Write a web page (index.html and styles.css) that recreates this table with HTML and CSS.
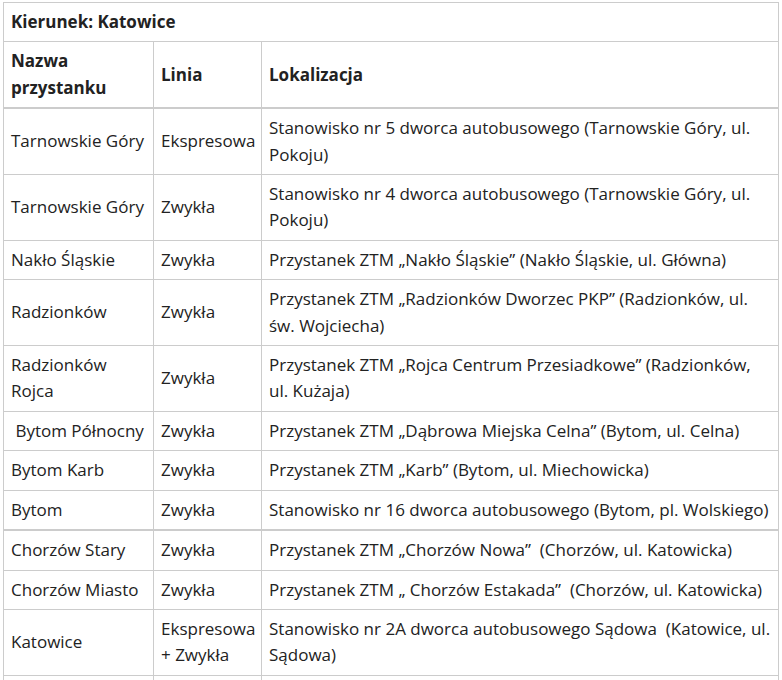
FILE: index.html
```html
<!DOCTYPE html>
<html lang="pl">
<head>
<meta charset="utf-8">
<title>Kierunek: Katowice</title>
<link rel="stylesheet" href="styles.css">
</head>
<body>
<table class="schedule">
  <colgroup>
    <col class="c-name">
    <col class="c-line">
    <col class="c-loc">
  </colgroup>
  <thead>
    <tr class="caption-row"><th colspan="3">Kierunek: Katowice</th></tr>
    <tr class="head-row">
      <th>Nazwa przystanku</th>
      <th>Linia</th>
      <th>Lokalizacja</th>
    </tr>
  </thead>
  <tbody>
    <tr><td>Tarnowskie Góry</td><td>Ekspresowa</td><td>Stanowisko nr 5 dworca autobusowego (Tarnowskie Góry, ul. Pokoju)</td></tr>
    <tr><td>Tarnowskie Góry</td><td>Zwykła</td><td>Stanowisko nr 4 dworca autobusowego (Tarnowskie Góry, ul. Pokoju)</td></tr>
    <tr><td>Nakło Śląskie</td><td>Zwykła</td><td>Przystanek ZTM „Nakło Śląskie” (Nakło Śląskie, ul. Główna)</td></tr>
    <tr><td>Radzionków</td><td>Zwykła</td><td>Przystanek ZTM „Radzionków Dworzec PKP” (Radzionków, ul. św. Wojciecha)</td></tr>
    <tr><td>Radzionków Rojca</td><td>Zwykła</td><td>Przystanek ZTM „Rojca Centrum Przesiadkowe” (Radzionków, ul. Kużaja)</td></tr>
    <tr><td>&nbsp;Bytom Północny</td><td>Zwykła</td><td>Przystanek ZTM „Dąbrowa Miejska Celna” (Bytom, ul. Celna)</td></tr>
    <tr><td>Bytom Karb</td><td>Zwykła</td><td>Przystanek ZTM „Karb” (Bytom, ul. Miechowicka)</td></tr>
    <tr class="group-end"><td>Bytom</td><td>Zwykła</td><td>Stanowisko nr 16 dworca autobusowego (Bytom, pl. Wolskiego)</td></tr>
  </tbody>
  <tbody>
    <tr><td>Chorzów Stary</td><td>Zwykła</td><td>Przystanek ZTM „Chorzów Nowa”&nbsp; (Chorzów, ul. Katowicka)</td></tr>
    <tr><td>Chorzów Miasto</td><td>Zwykła</td><td>Przystanek ZTM „ Chorzów Estakada”&nbsp; (Chorzów, ul. Katowicka)</td></tr>
    <tr><td>Katowice</td><td>Ekspresowa + Zwykła</td><td>Stanowisko nr 2A dworca autobusowego Sądowa&nbsp; (Katowice, ul. Sądowa)</td></tr>
    <tr><td>&nbsp;</td><td>&nbsp;</td><td>&nbsp;</td></tr>
  </tbody>
</table>
</body>
</html>
```

FILE: styles.css
```css
html, body {
  margin: 0;
  padding: 0;
  background: #ffffff;
}

body {
  padding: 2px 4px 0 3px;
  font-family: "Open Sans", "Noto Sans", "Liberation Sans", sans-serif;
  font-size: 17px;
  color: #222222;
}

.schedule {
  width: 776px;
  border-collapse: collapse;
  table-layout: fixed;
}

.c-name { width: 150px; }
.c-line { width: 108px; }

.schedule th,
.schedule td {
  border: 1px solid #cccccc;
  padding: 6px 7px;
  line-height: 26.4px;
  text-align: left;
  vertical-align: middle;
}

.schedule th {
  font-weight: 700;
}

.head-row th {
  border-bottom: 2px solid #cccccc;
}

.group-end td {
  border-bottom: 2px solid #cccccc;
}
```
